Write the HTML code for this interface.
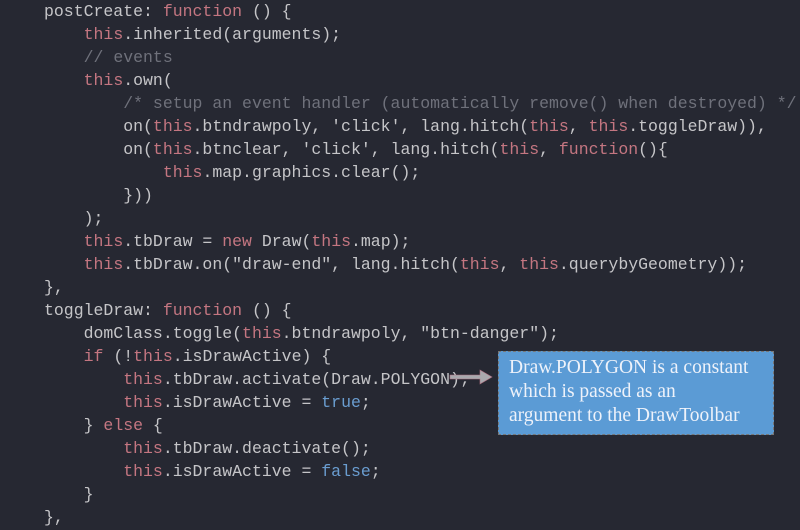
<!DOCTYPE html>
<html><head><style>
html,body{margin:0;padding:0;background:#262832;width:800px;height:530px;overflow:hidden}
pre{margin:0;position:absolute;left:44px;top:0;font-family:"Liberation Mono",monospace;font-size:16.5px;line-height:23px;color:#c5c5c8;letter-spacing:0}
.k{color:#c47681}.c{color:#6f717b}.b{color:#6a9dd0}
.box{position:absolute;left:498px;top:351px;width:276px;height:84px;background:#5b9bd5;border:1px dashed #777;box-sizing:border-box;font-family:"Liberation Serif",serif;font-size:19.5px;line-height:24px;color:#eef2fa;padding:4px 0 0 10px;white-space:nowrap}
</style></head><body>
<pre>postCreate: <span class="k">function</span> () {
    <span class="k">this</span>.inherited(arguments);
    <span class="c">// events</span>
    <span class="k">this</span>.own(
        <span class="c">/* setup an event handler (automatically remove() when destroyed) */</span>
        on(<span class="k">this</span>.btndrawpoly, 'click', lang.hitch(<span class="k">this</span>, <span class="k">this</span>.toggleDraw)),
        on(<span class="k">this</span>.btnclear, 'click', lang.hitch(<span class="k">this</span>, <span class="k">function</span>(){
            <span class="k">this</span>.map.graphics.clear();
        }))
    );
    <span class="k">this</span>.tbDraw = <span class="k">new</span> Draw(<span class="k">this</span>.map);
    <span class="k">this</span>.tbDraw.on("draw-end", lang.hitch(<span class="k">this</span>, <span class="k">this</span>.querybyGeometry));
},
toggleDraw: <span class="k">function</span> () {
    domClass.toggle(<span class="k">this</span>.btndrawpoly, "btn-danger");
    <span class="k">if</span> (!<span class="k">this</span>.isDrawActive) {
        <span class="k">this</span>.tbDraw.activate(Draw.POLYGON);
        <span class="k">this</span>.isDrawActive = <span class="b">true</span>;
    } <span class="k">else</span> {
        <span class="k">this</span>.tbDraw.deactivate();
        <span class="k">this</span>.isDrawActive = <span class="b">false</span>;
    }
},</pre>
<svg style="position:absolute;left:448px;top:369px" width="46" height="16"><path d="M2 6H32V1L44 8L32 15V10H2Z" fill="#a9a9ae" stroke="#b07080" stroke-width="0.6"/></svg>
<div class="box">Draw.POLYGON is a constant<br>which is passed as an<br>argument to the DrawToolbar</div>
</body></html>
